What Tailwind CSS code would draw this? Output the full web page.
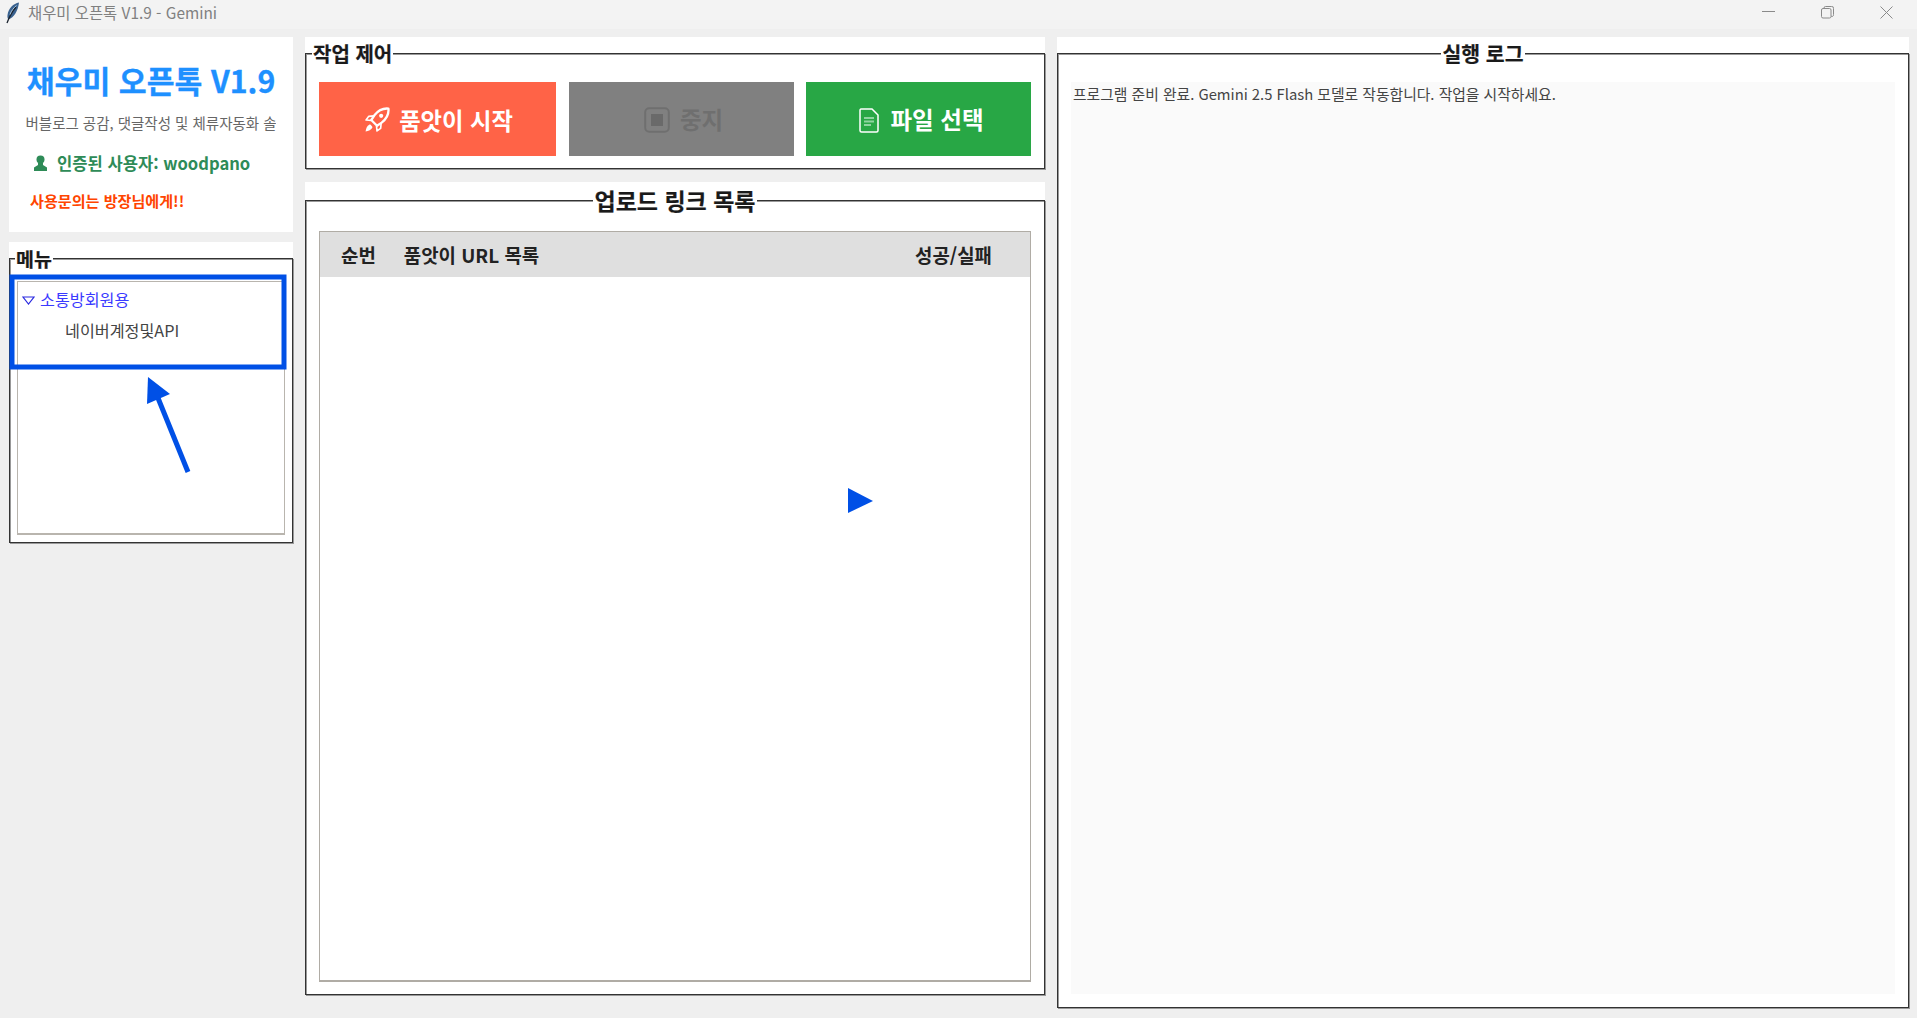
<!DOCTYPE html>
<html lang="ko">
<head>
  <meta charset="UTF-8">
  <meta name="viewport" content="width=device-width, initial-scale=1.0">
  <title>채우미 오픈톡 V1.9 - Gemini</title>
  <script src="https://cdn.jsdelivr.net/npm/@tailwindcss/browser@4"></script>
</head>
<body class="bg-[#efefef] font-['Noto_Sans_CJK_KR','Noto_Sans',sans-serif] overflow-hidden">
  <div class="relative h-[1018px] w-[1917px] flex flex-col">

    <!-- Title bar -->
    <div class="h-[29px] bg-[#f3f3f3] flex items-start pt-[2px] shrink-0">
      <svg class="ml-[5px] w-[15px] h-[22px]" viewBox="0 0 15 22">
        <path d="M14 .5C8.500 1.500 3.500 6 2.500 13c-.3 2 .2 3.500 1 4.500C9 15.500 13 9 14 .5z" fill="#3a628f"/>
        <path d="M11 5C7.500 9 4.500 14.500 2 21" stroke="#1c2530" stroke-width="1.300" fill="none"/>
        <path d="M11.500 3.500C9 5.500 6 9 5 12.500" stroke="#a8c4de" stroke-width="1" fill="none"/>
      </svg>
      <span class="ml-[8px] text-[15.400px] leading-[20px] text-[#808080]">채우미 오픈톡 V1.9 - Gemini</span>
      <div class="ml-auto flex items-center pt-[4px]">
        <svg class="w-[13px] h-[13px] mr-[46px]" viewBox="0 0 13 13"><path d="M0 5.500h13" stroke="#8a8a8a" stroke-width="1"/></svg>
        <svg class="w-[13px] h-[13px] mr-[46px]" viewBox="0 0 13 13" fill="none" stroke="#8a8a8a"><rect x=".5" y="2.500" width="9.500" height="9.500" rx="1.500"/><path d="M3 2.500V2A1.500 1.500 0 0 1 4.500.5h6A1.800 1.800 0 0 1 12.500 2.500v6A1.500 1.500 0 0 1 10 10"/></svg>
        <svg class="w-[13px] h-[13px] mr-[24px]" viewBox="0 0 13 13" stroke="#8a8a8a"><path d="M.5.5l12 12M12.500.5l-12 12"/></svg>
      </div>
    </div>

    <div class="flex gap-[12px] pl-[9px] pt-[8px]">

      <!-- Left column -->
      <div class="w-[284px] flex flex-col gap-[10px]">
        <div class="h-[195px] bg-white flex flex-col">
          <div class="mt-[23px] text-center text-[30.300px] leading-[40px] font-bold text-[#1e90ff] [-webkit-text-stroke:0.3px_#1e90ff]">채우미 오픈톡 V1.9</div>
          <div class="mt-[13px] mx-[17px] h-[20px] flex justify-center overflow-hidden text-[14.500px] leading-[20px] text-[#666] whitespace-nowrap">네이버블로그 공감, 댓글작성 및 체류자동화 솔루션</div>
          <div class="mt-[18px] ml-[24px] h-[24px] flex items-center gap-[9px] text-[16.600px] font-bold text-[#2e8b57]">
            <svg class="w-[15px] h-[16px]" viewBox="0 0 15 16" fill="#2e8b57"><circle cx="7.500" cy="4.500" r="4"/><path d="M5 8h5v2l4 2.500V16H1v-3.500L5 10z"/></svg>
            <span>인증된 사용자: woodpano</span>
          </div>
          <div class="mt-[13px] ml-[21px] text-[15.100px] leading-[24px] font-bold text-[#ff4500]">사용문의는 방장님에게!!</div>
        </div>

        <div class="bg-white h-[301px]">
          <fieldset class="h-full border border-[#333] shadow-[inset_1px_1px_0_#999,1px_1px_0_#999] px-[7px]">
            <legend class="-ml-[2px] px-[1px] bg-white translate-y-[1px] text-[19.500px] leading-[32px] font-bold text-[#1a1a1a] [-webkit-text-stroke:0.2px_#1a1a1a]">메뉴</legend>
            <div class="mt-[7px] h-[254px] border border-[#b9b5ae] border-b-2 pl-[5px]">
              <div class="mt-[5px] flex items-center h-[24px]">
                <svg class="w-[13px] h-[9px] mt-[3px] -ml-[1px]" viewBox="0 0 13 9" fill="none" stroke="#2a2ae0" stroke-width="1.200"><path d="M1 1h11L6.500 8z"/></svg>
                <span class="ml-[5px] text-[16.200px] text-[#3a3aff]">소통방회원용</span>
              </div>
              <div class="mt-[7px] ml-[42px] h-[24px] text-[16.200px] leading-[24px] text-[#444]">네이버계정및API</div>
            </div>
          </fieldset>
        </div>
      </div>

      <!-- Middle column -->
      <div class="w-[740px] flex flex-col gap-[13px]">
        <div class="bg-white h-[132px]">
          <fieldset class="h-full border border-[#333] shadow-[inset_1px_1px_0_#999,1px_1px_0_#999] px-[13px]">
            <legend class="-ml-[7px] px-[1px] bg-white translate-y-[1px] text-[20px] leading-[32px] font-bold text-[#1a1a1a] [-webkit-text-stroke:0.2px_#1a1a1a]">작업 제어</legend>
            <div class="mt-[13px] flex gap-[12px]">
              <div class="w-[237px] h-[74px] pt-[2px] pl-[2px] bg-[#ff6347] flex items-center justify-center gap-[9px] text-[23.300px] font-bold text-white">
                <svg class="w-[26px] h-[26px]" viewBox="0 0 25 25" fill="none" stroke="#fff" stroke-width="2.200" stroke-linejoin="round">
                  <path d="M23.500 1.500c-5-.5-10 2-13.500 6.500l-3 4.500 5.500 5.500 4.500-3c4.500-3.500 7-8.500 6.500-13.500z"/>
                  <circle cx="16.500" cy="8.500" r="2" fill="#fff" stroke="none"/>
                  <path d="M9.500 8.500l-5 .5-2.500 3.500 5 .5M16.500 15.500l-.5 5-3.500 2.500-.5-5" stroke-width="1.600"/>
                  <path d="M5 17c-2 1-3 3.500-3.500 6.500C4.500 23 7 22 8 20c.4-1-.6-1.800-1-2.200S5.800 16.700 5 17z" fill="#fff" stroke="none"/>
                </svg>
                <span>품앗이 시작</span>
              </div>
              <div class="ml-[1px] w-[225px] h-[74px] pt-[2px] pl-[4px] bg-[#808080] flex items-center justify-center gap-[10px] text-[23.500px] font-bold text-[#6f6f6f]">
                <svg class="w-[26px] h-[26px]" viewBox="0 0 26 26"><rect x="1.200" y="1.200" width="23.600" height="23.600" rx="4" fill="none" stroke="#6f6f6f" stroke-width="2"/><rect x="7" y="7" width="12" height="12" fill="#6a6a6a"/></svg>
                <span>중지</span>
              </div>
              <div class="w-[225px] h-[74px] pt-[2px] pl-[6px] bg-[#28a745] flex items-center justify-center gap-[11px] text-[23.500px] font-bold text-white">
                <svg class="w-[20px] h-[25px]" viewBox="0 0 20 25" fill="none"><path d="M3 1h10l6 6v15.500a1.500 1.500 0 0 1-1.500 1.500h-15A1.500 1.500 0 0 1 1 22.500v-20A1.500 1.500 0 0 1 3 1z" stroke="#fff" stroke-width="1.500"/><path d="M5 9h10v2H5zM5 12.500h10v2H5zM5 16h7v2H5z" fill="#8fd4a0"/></svg>
                <span>파일 선택</span>
              </div>
            </div>
          </fieldset>
        </div>

        <div class="bg-white h-[813px]">
          <fieldset class="h-full border border-[#333] shadow-[inset_1px_1px_0_#999,1px_1px_0_#999] px-[13px]">
            <legend class="mx-auto px-[1px] bg-white text-[23px] leading-[36px] font-bold text-[#1a1a1a] [-webkit-text-stroke:0.2px_#1a1a1a]">업로드 링크 목록</legend>
            <div class="mt-[13px] h-[751px] border border-[#b0aca5] border-b-2 bg-white">
              <div class="h-[45px] pt-[2px] bg-[#dfdfdf] flex items-center text-[18.900px] font-bold text-[#222]">
                <span class="ml-[21px]">순번</span>
                <span class="ml-[28px]">품앗이 URL 목록</span>
                <span class="ml-auto mr-[38px]">성공/실패</span>
              </div>
            </div>
          </fieldset>
        </div>
      </div>

      <!-- Right column -->
      <div class="w-[852px] bg-white h-[971px]">
        <fieldset class="h-full border border-[#333] shadow-[inset_1px_1px_0_#999,1px_1px_0_#999] px-[13px]">
          <legend class="mx-auto px-[1px] bg-white text-[20.500px] leading-[32px] font-bold text-[#1a1a1a] [-webkit-text-stroke:0.2px_#1a1a1a]">실행 로그</legend>
          <div class="mt-[13px] h-[912px] bg-[#fafafa] pl-[2px] text-[14.800px] leading-[24px] text-[#444]">프로그램 준비 완료. Gemini 2.5 Flash 모델로 작동합니다. 작업을 시작하세요.</div>
        </fieldset>
      </div>
    </div>

    <!-- Blue annotations drawn over the screenshot -->
    <svg class="absolute inset-0 pointer-events-none" width="1917" height="1018" viewBox="0 0 1917 1018">
      <rect x="12" y="277" width="272" height="90" fill="none" stroke="#0050e6" stroke-width="5"/>
      <path d="M188 472L158 398" stroke="#0050e6" stroke-width="5" fill="none"/>
      <path d="M148 377L170 394L147 404z" fill="#0050e6"/>
      <path d="M848 488L873 501L848 513z" fill="#0050e6"/>
    </svg>
  </div>
</body>
</html>
